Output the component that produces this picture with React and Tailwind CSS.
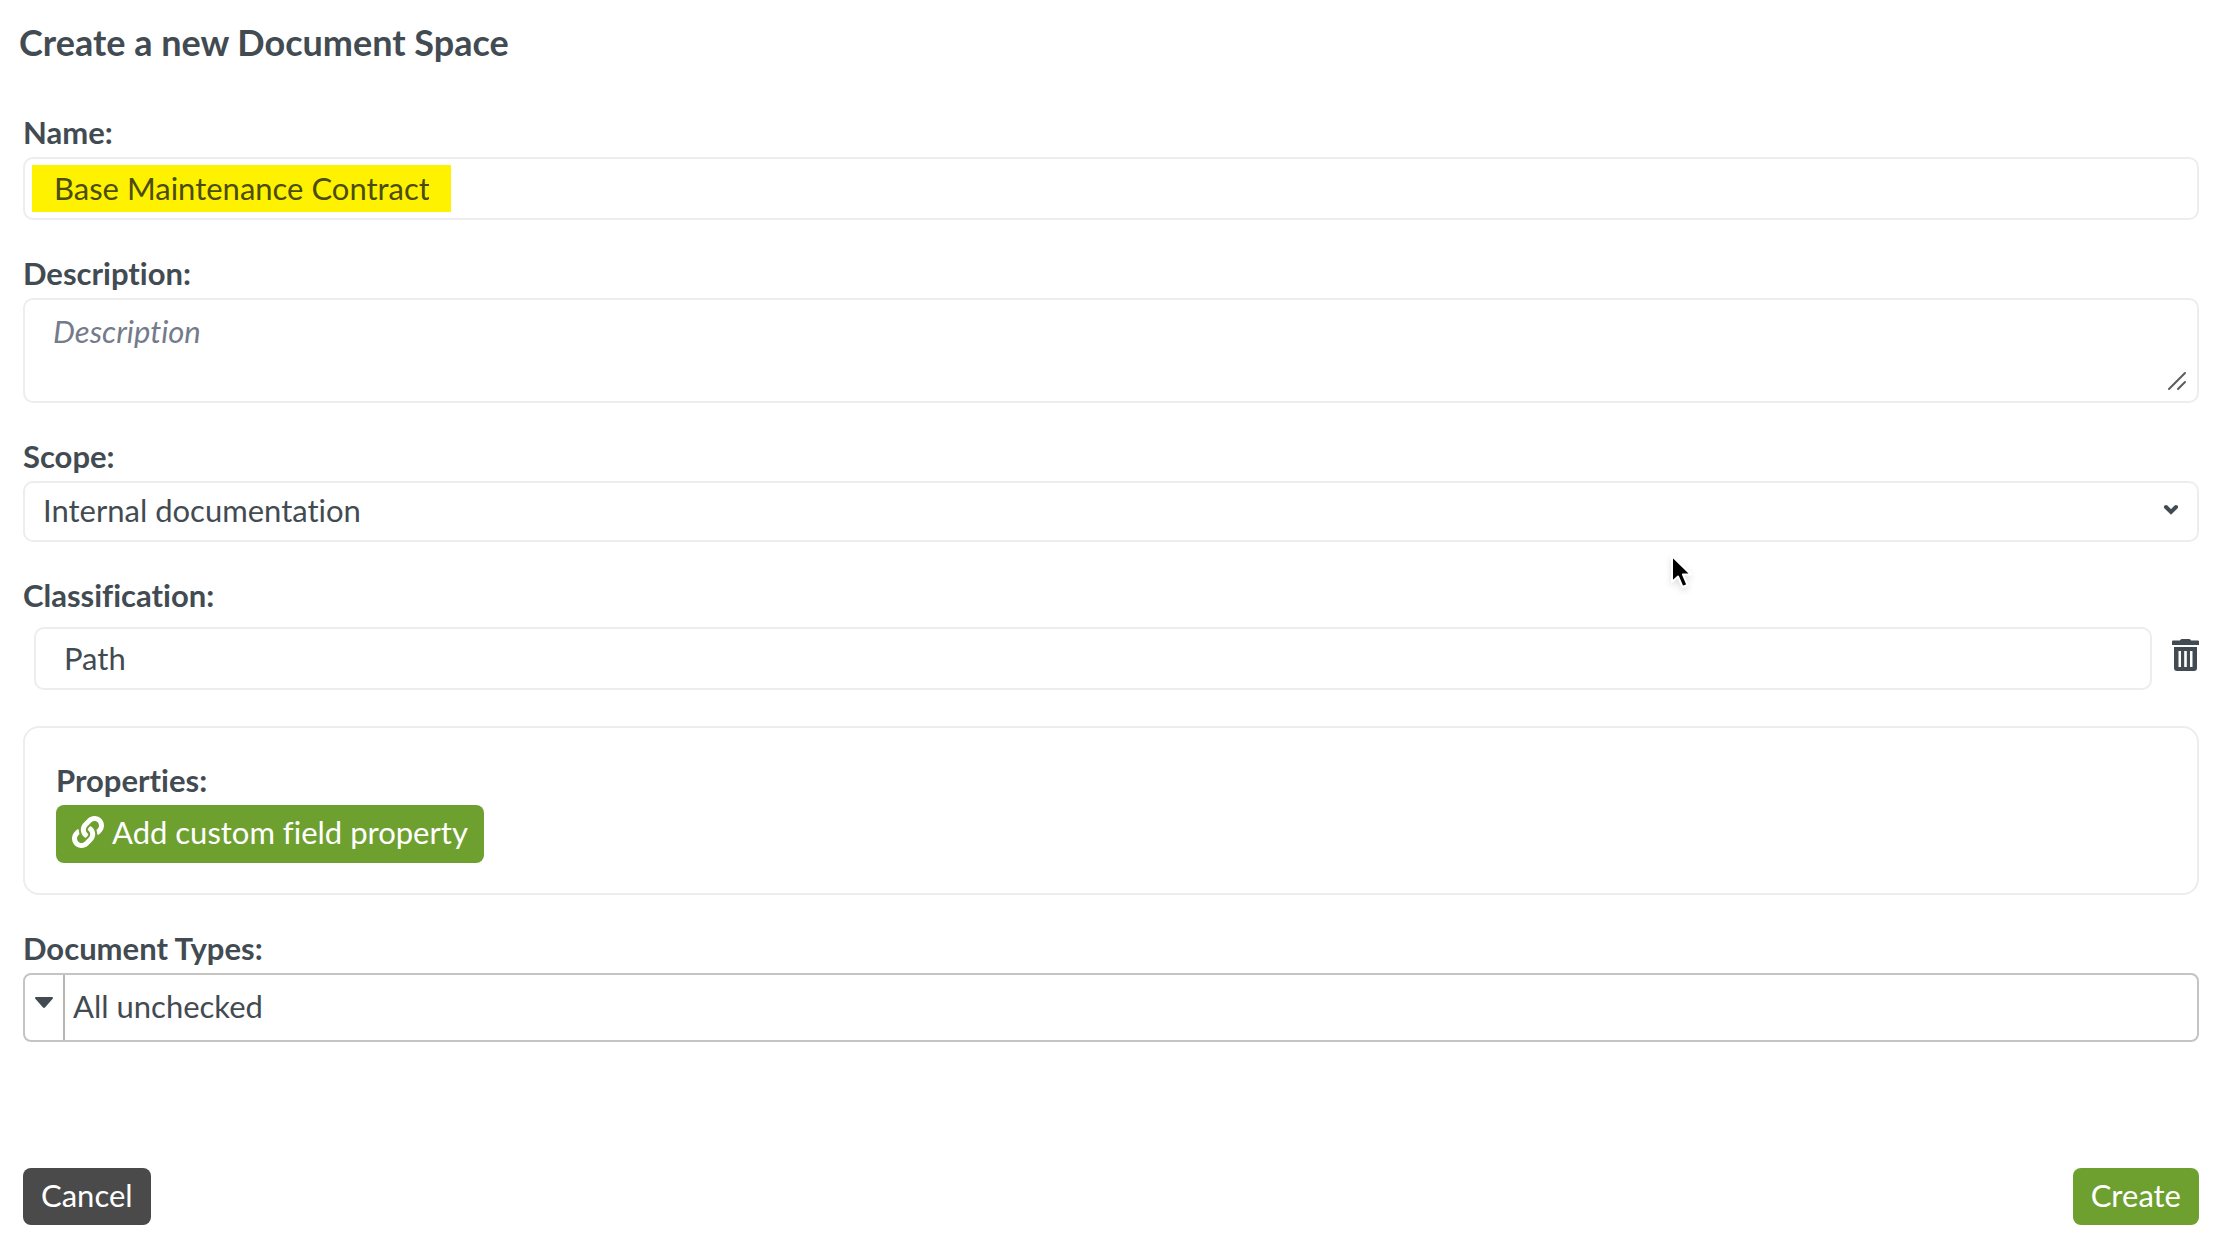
import { useState } from 'react';
import { FaLink } from 'react-icons/fa';

const fieldBox = 'rounded-[10px] border-2 border-[#ededed] bg-white';

function Label({ htmlFor, children }) {
  return (
    <label htmlFor={htmlFor} className="block leading-[50px] font-bold">
      {children}
    </label>
  );
}

function TrashIcon() {
  return (
    <svg viewBox="0 0 27 32" className="h-8 w-[27px]" fill="currentColor" aria-hidden="true">
      <path d="M10 0h7a2 2 0 0 1 2 1.500h7a1 1 0 0 1 1 1V6H0V2.500a1 1 0 0 1 1-1h7A2 2 0 0 1 10 0Z" />
      <path
        fillRule="evenodd"
        d="M2 8h23v21a3 3 0 0 1-3 3H5a3 3 0 0 1-3-3V8Zm4.500 4v16H9V12H6.500Zm5.700 0v16h2.600V12h-2.600Zm5.800 0v16h2.500V12H18Z"
      />
    </svg>
  );
}

function Pointer() {
  return (
    <svg
      viewBox="0 0 24 36"
      className="pointer-events-none absolute top-[553px] left-[1669px] h-9 w-6 drop-shadow-md"
      aria-hidden="true"
    >
      <path
        d="M3 3v26l6-5.500 4.500 10.500 5-2-4.500-10.500h8L3 3Z"
        fill="#000"
        stroke="#fff"
        strokeWidth="2"
        strokeLinejoin="round"
      />
    </svg>
  );
}

export default function App() {
  const [name, setName] = useState('Base Maintenance Contract');
  const [description, setDescription] = useState('');
  const [path, setPath] = useState('Path');

  return (
    <main className="relative min-h-screen bg-white pt-4 pr-[19px] pb-4 pl-[23px] font-['Lato',sans-serif] text-[31px] text-[#424b52] [font-variant-ligatures:none]">
      <h1 className="-ml-1 text-[36px] leading-[52px] font-bold">Create a new Document Space</h1>

      <form className="mt-[39px] flex flex-col gap-7" onSubmit={(e) => e.preventDefault()}>
        <div>
          <Label htmlFor="name">Name:</Label>
          <div className={`${fieldBox} flex h-[63px] items-center px-[7px]`}>
            <input
              id="name"
              value={name}
              onChange={(e) => setName(e.target.value)}
              className="h-[47px] w-[419px] bg-[#fff200] px-[22px] pb-0.5 text-[#4c4d0c] outline-none"
            />
          </div>
        </div>

        <div>
          <Label htmlFor="description">Description:</Label>
          <div className="relative">
            <textarea
              id="description"
              value={description}
              onChange={(e) => setDescription(e.target.value)}
              placeholder="Description"
              className={`${fieldBox} block h-[105px] w-full resize-none px-7 py-2 leading-[46px] outline-none placeholder:text-[#747b8a] placeholder:italic`}
            />
            <svg
              viewBox="0 0 20 20"
              className="pointer-events-none absolute right-3 bottom-3 size-5"
              stroke="#5c5c5c"
              strokeWidth="2"
              strokeLinecap="round"
              aria-hidden="true"
            >
              <path d="M2 18 18 2M11 18l7-7" />
            </svg>
          </div>
        </div>

        <div>
          <Label htmlFor="scope">Scope:</Label>
          <div className="relative">
            <select
              id="scope"
              className={`${fieldBox} block h-[61px] w-full appearance-none px-[18px] pb-0.5 outline-none`}
            >
              <option>Internal documentation</option>
            </select>
            <svg
              viewBox="0 0 16 12"
              className="pointer-events-none absolute top-[23px] right-5 h-3 w-4"
              fill="none"
              stroke="currentColor"
              strokeWidth="4"
              strokeLinecap="round"
              aria-hidden="true"
            >
              <path d="m3 3 5 5 5-5" />
            </svg>
          </div>
        </div>

        <div>
          <Label htmlFor="path">Classification:</Label>
          <div className="mt-[7px] mb-2 flex items-center gap-5 pl-[11px]">
            <input
              id="path"
              value={path}
              onChange={(e) => setPath(e.target.value)}
              className={`${fieldBox} h-[63px] min-w-0 flex-1 px-7 pb-0.5 outline-none`}
            />
            <button type="button" aria-label="Delete classification" className="mb-2">
              <TrashIcon />
            </button>
          </div>
        </div>

        <section className="rounded-2xl border-2 border-[#ededed] px-[31px] pt-[27px] pb-[30px]">
          <h2 className="leading-[50px] font-bold">Properties:</h2>
          <button
            type="button"
            className="flex h-[58px] items-center gap-2 rounded-lg bg-[#6ea030] px-4 pb-1 text-white"
          >
            <FaLink size={32} />
            Add custom field property
          </button>
        </section>

        <div>
          <Label htmlFor="types">Document Types:</Label>
          <div className="flex h-[69px] rounded-lg border-2 border-[#c4c5c1]">
            <button
              type="button"
              aria-label="Open document types"
              className="flex w-10 items-start justify-center border-r-2 border-[#b5b6b1] pt-[22px]"
            >
              <svg viewBox="0 0 18 11" className="h-[11px] w-[18px]" fill="currentColor" aria-hidden="true">
                <path d="M1 0h16a1 1 0 0 1 .7 1.700l-7.500 8.600a1.700 1.700 0 0 1-2.400 0L.3 1.700A1 1 0 0 1 1 0Z" />
              </svg>
            </button>
            <input
              id="types"
              readOnly
              value="All unchecked"
              className="min-w-0 flex-1 bg-transparent px-2 pb-0.5 outline-none"
            />
          </div>
        </div>

        <footer className="mt-[98px] flex items-center justify-between text-white">
          <button type="button" className="h-[57px] rounded-lg bg-[#4a4a4a] px-[18px] pb-0.5">
            Cancel
          </button>
          <button type="submit" className="h-[57px] rounded-lg bg-[#6ea030] px-[18px] pb-0.5">
            Create
          </button>
        </footer>
      </form>

      <Pointer />
    </main>
  );
}
